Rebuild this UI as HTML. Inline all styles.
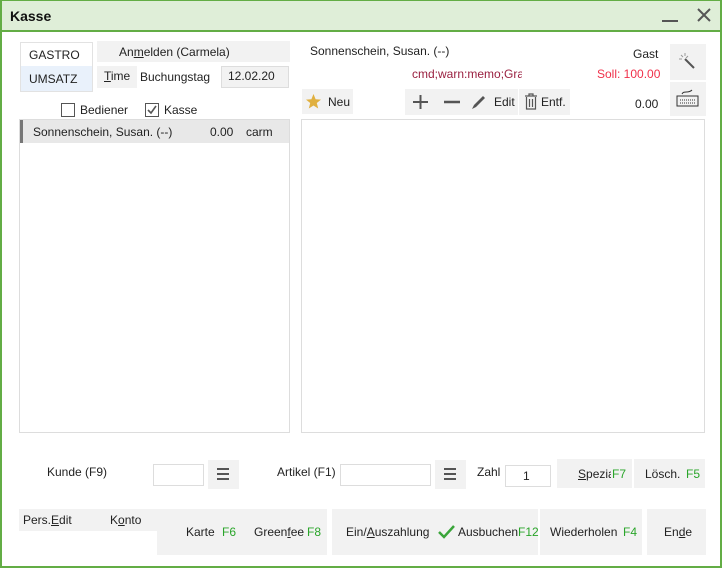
<!DOCTYPE html>
<html><head><meta charset="utf-8"><style>
*{margin:0;padding:0;box-sizing:border-box}
body{width:722px;height:568px;background:#fff;font-family:"Liberation Sans","DejaVu Sans",sans-serif;font-size:12px;color:#222;position:relative;overflow:hidden}
.a{position:absolute}
.g{background:#f2f2f2}
.t{position:absolute;white-space:nowrap;line-height:14px}
.gr{color:#2aa52a}
u{text-decoration:underline}
.inp{position:absolute;border:1px solid #ddd;background:#fff}
</style></head><body>
<div class="a" style="left:0;top:0;width:722px;height:568px;border:2px solid #63ad45;border-top:1px solid #63ad45"></div>
<div class="a" style="left:0;top:0;width:722px;height:32px;background:#dfeed8;border:2px solid #63ad45;border-top:1px solid #63ad45"></div>
<div class="t" style="left:10px;top:8px;font-weight:bold;font-size:14px;line-height:16px;color:#111">Kasse</div>
<div class="a" style="left:662px;top:20px;width:16px;height:2px;background:#555"></div>
<svg class="a" style="left:696px;top:7px" width="16" height="16"><path d="M2 2L14 14M14 2L2 14" stroke="#555" stroke-width="2"/></svg>

<div class="a" style="left:20px;top:42px;width:73px;height:50px;border:1px solid #e2e2e2"></div>
<div class="a" style="left:21px;top:66px;width:71px;height:25px;background:#e9f1fb"></div>
<div class="t" style="left:29px;top:48px">GASTRO</div>
<div class="t" style="left:29px;top:72px">UMSATZ</div>
<div class="a g" style="left:97px;top:41px;width:193px;height:21px"></div>
<div class="t" style="left:119px;top:45px">An<u>m</u>elden (Carmela)</div>
<div class="a g" style="left:97px;top:66px;width:40px;height:22px"></div>
<div class="t" style="left:104px;top:69px"><u>T</u>ime</div>
<div class="t" style="left:140px;top:70px">Buchungstag</div>
<div class="a g" style="left:221px;top:66px;width:68px;height:22px;border:1px solid #ddd"></div>
<div class="t" style="left:228px;top:69px">12.02.20</div>
<div class="a" style="left:61px;top:103px;width:14px;height:14px;border:1px solid #555"></div>
<div class="t" style="left:80px;top:103px">Bediener</div>
<div class="a" style="left:145px;top:103px;width:14px;height:14px;border:1px solid #555"></div>
<svg class="a" style="left:146px;top:104px" width="12" height="12"><path d="M2 6L5 9L10 2" stroke="#555" stroke-width="1.6" fill="none"/></svg>
<div class="t" style="left:164px;top:103px">Kasse</div>

<div class="a" style="left:19px;top:119px;width:271px;height:314px;border:1px solid #ddd"></div>
<div class="a" style="left:20px;top:120px;width:269px;height:23px;background:#e8e8e8"></div>
<div class="a" style="left:20px;top:120px;width:3px;height:23px;background:#777"></div>
<div class="t" style="left:33px;top:125px">Sonnenschein, Susan. (--)</div>
<div class="t" style="left:210px;top:125px">0.00</div>
<div class="t" style="left:246px;top:125px">carm</div>

<div class="t" style="left:310px;top:44px">Sonnenschein, Susan. (--)</div>
<div class="t" style="left:633px;top:47px">Gast</div>
<div class="t" style="left:412px;top:67px;color:#9a2040;width:110px;overflow:hidden">cmd;warn:memo;Grat</div>
<div class="t" style="left:597px;top:67px;color:#f0304a">Soll: 100.00</div>
<div class="a g" style="left:302px;top:89px;width:51px;height:25px"></div>
<svg class="a" style="left:305px;top:93px" width="17" height="17"><path d="M8.5 1L10.6 6.3L16 6.6L11.8 10L13.2 15.5L8.5 12.5L3.8 15.5L5.2 10L1 6.6L6.4 6.3Z" fill="#e0b040"/></svg>
<div class="t" style="left:328px;top:95px">Neu</div>
<div class="a g" style="left:405px;top:89px;width:113px;height:26px"></div>
<div class="a g" style="left:519px;top:89px;width:51px;height:26px"></div>
<svg class="a" style="left:410px;top:93px" width="100" height="18"><path d="M3 9H18M10.5 2V16" stroke="#555" stroke-width="2"/><path d="M34 9H50" stroke="#555" stroke-width="2.5"/><path d="M62 16L64 12L73 3L75 5L66 14Z" fill="#555"/></svg>
<div class="t" style="left:494px;top:95px">Edit</div>
<svg class="a" style="left:523px;top:92px" width="16" height="20"><path d="M2 4H14M6 4V2H10V4M3.5 5V17H12.5V5M6.5 7V15M9.5 7V15" stroke="#555" stroke-width="1.2" fill="none"/></svg>
<div class="t" style="left:541px;top:95px">Entf.</div>
<div class="t" style="left:635px;top:97px">0.00</div>
<div class="a g" style="left:670px;top:44px;width:36px;height:36px"></div>
<svg class="a" style="left:678px;top:52px" width="20" height="20"><path d="M7 7L16 16" stroke="#555" stroke-width="2"/><path d="M3 3L5 5M7 1V4M1 7H4M10 4L8 6" stroke="#999" stroke-width="1"/></svg>
<div class="a g" style="left:670px;top:82px;width:36px;height:34px"></div>
<svg class="a" style="left:676px;top:88px" width="24" height="22"><path d="M6 6C8 2 12 6 16 2" stroke="#333" fill="none"/><rect x="1" y="8" width="21" height="10" fill="none" stroke="#333"/><path d="M4 12H19M4 15H19" stroke="#333" stroke-dasharray="1 1"/></svg>
<div class="a" style="left:301px;top:119px;width:404px;height:314px;border:1px solid #ddd"></div>

<div class="t" style="left:47px;top:465px">Kunde (F9)</div>
<div class="inp" style="left:153px;top:464px;width:51px;height:22px"></div>
<div class="a g" style="left:208px;top:460px;width:31px;height:29px"></div>
<svg class="a" style="left:216px;top:467px" width="14" height="14"><path d="M1 2H13M1 7H13M1 12H13" stroke="#555" stroke-width="2"/></svg>
<div class="t" style="left:277px;top:465px">Artikel (F1)</div>
<div class="inp" style="left:340px;top:464px;width:91px;height:22px"></div>
<div class="a g" style="left:435px;top:460px;width:31px;height:29px"></div>
<svg class="a" style="left:443px;top:467px" width="14" height="14"><path d="M1 2H13M1 7H13M1 12H13" stroke="#555" stroke-width="2"/></svg>
<div class="t" style="left:477px;top:465px">Zahl</div>
<div class="inp" style="left:505px;top:465px;width:46px;height:22px"></div>
<div class="t" style="left:523px;top:469px">1</div>
<div class="a g" style="left:557px;top:459px;width:75px;height:29px"></div>
<div class="t" style="left:578px;top:467px;width:33px;overflow:hidden"><u>S</u>pezial</div>
<div class="t gr" style="left:612px;top:467px">F7</div>
<div class="a g" style="left:634px;top:459px;width:71px;height:29px"></div>
<div class="t" style="left:645px;top:467px">Lösch.</div>
<div class="t gr" style="left:686px;top:467px">F5</div>

<div class="a g" style="left:19px;top:509px;width:140px;height:22px"></div>
<div class="a g" style="left:157px;top:509px;width:170px;height:46px"></div>
<div class="t" style="left:23px;top:513px">Pers.<u>E</u>dit</div>
<div class="t" style="left:110px;top:513px">K<u>o</u>nto</div>
<div class="t" style="left:186px;top:525px">Karte</div>
<div class="t gr" style="left:222px;top:525px">F6</div>
<div class="t" style="left:254px;top:525px">Green<u>f</u>ee</div>
<div class="t gr" style="left:307px;top:525px">F8</div>
<div class="a g" style="left:332px;top:509px;width:206px;height:46px"></div>
<div class="t" style="left:346px;top:525px">Ein/<u>A</u>uszahlung</div>
<svg class="a" style="left:438px;top:524px" width="18" height="16"><path d="M1 8L6 13L16 2" stroke="#3aa53a" stroke-width="2.5" fill="none"/></svg>
<div class="t" style="left:458px;top:525px">Ausbuchen</div>
<div class="t gr" style="left:518px;top:525px">F12</div>
<div class="a g" style="left:540px;top:509px;width:102px;height:46px"></div>
<div class="t" style="left:550px;top:525px">Wiederholen</div>
<div class="t gr" style="left:623px;top:525px">F4</div>
<div class="a g" style="left:647px;top:509px;width:59px;height:46px"></div>
<div class="t" style="left:664px;top:525px">En<u>d</u>e</div>
</body></html>
